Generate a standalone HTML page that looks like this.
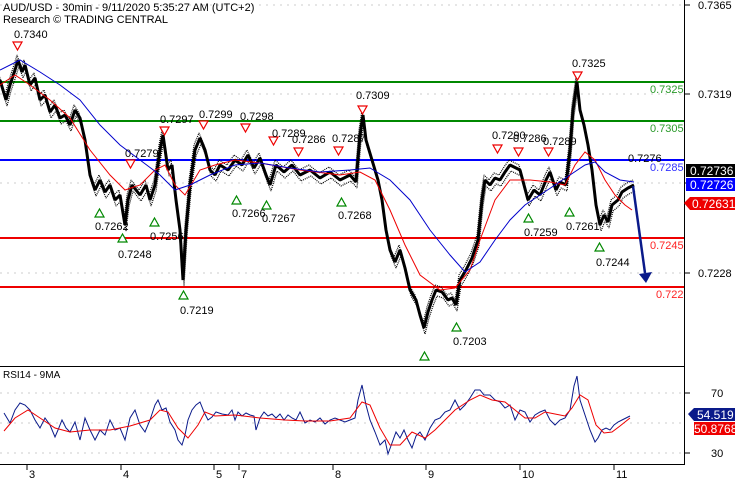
<!DOCTYPE html>
<html><head><meta charset="utf-8"><style>
html,body{margin:0;padding:0;background:#fff;width:735px;height:480px;overflow:hidden}
svg{display:block;font-family:"Liberation Sans",Arial,sans-serif}
</style></head><body>
<svg width="735" height="480" viewBox="0 0 735 480">
<defs>
<polyline id="px" fill="none" stroke-linejoin="bevel" points="0,80 6,100 10,85 15,70 18,60 22,72 25,65 30,85 35,78 40,100 45,95 50,112 55,105 60,118 65,115 70,125 75,110 80,118 85,140 90,175 95,190 100,180 105,192 110,185 115,200 120,195 125,225 128,200 132,185 140,195 146,185 150,200 155,185 160,150 163,135 168,170 172,165 176,200 180,230 183,280 186,230 190,185 195,150 200,138 205,150 210,170 215,175 220,165 228,170 235,160 242,165 248,155 254,168 260,158 266,175 270,185 276,165 284,172 292,165 300,175 310,170 320,178 330,172 340,180 350,175 356,182 360,135 363,115 366,140 372,160 378,180 382,200 386,230 390,250 395,262 400,250 405,268 410,290 416,300 420,315 424,328 428,312 432,300 436,290 442,292 448,300 452,298 456,305 460,280 466,270 472,258 478,240 482,200 485,180 490,185 495,178 500,180 505,172 510,165 516,168 520,170 524,185 528,200 534,190 540,195 546,180 550,172 556,190 560,182 566,185 570,150 573,110 577,82 580,110 584,125 588,145 592,170 596,205 600,225 604,215 608,222 612,205 618,200 622,192 628,188 634,185"/>
</defs>
<rect width="735" height="480" fill="#fff"/>
<g stroke="#ccc" stroke-dasharray="2,5">
<line x1="0" y1="5" x2="684" y2="5"/><line x1="0" y1="94" x2="684" y2="94"/><line x1="0" y1="183" x2="684" y2="183"/><line x1="0" y1="273" x2="684" y2="273"/>
<line x1="0" y1="393" x2="684" y2="393"/><line x1="0" y1="423" x2="684" y2="423"/><line x1="0" y1="453" x2="684" y2="453"/>
</g>
<line x1="684.5" y1="0" x2="684.5" y2="465" stroke="#000"/>
<line x1="0" y1="366.5" x2="684" y2="366.5" stroke="#000"/>
<line x1="0" y1="464.5" x2="684" y2="464.5" stroke="#000"/>
<g stroke="#000"><line x1="684" y1="5" x2="690" y2="5"/><line x1="684" y1="94" x2="690" y2="94"/><line x1="684" y1="183" x2="690" y2="183"/><line x1="684" y1="273" x2="690" y2="273"/><line x1="684" y1="393" x2="690" y2="393"/><line x1="684" y1="453" x2="690" y2="453"/></g>
<line x1="0" y1="82" x2="684" y2="82" stroke="#080" stroke-width="2"/>
<line x1="0" y1="121" x2="684" y2="121" stroke="#080" stroke-width="2"/>
<line x1="0" y1="160" x2="684" y2="160" stroke="#00f" stroke-width="2"/>
<line x1="0" y1="238" x2="684" y2="238" stroke="#e00" stroke-width="2"/>
<line x1="0" y1="287" x2="684" y2="287" stroke="#e00" stroke-width="2"/>
<text x="3" y="11" font-size="11">AUD/USD - 30min - 9/11/2020 5:35:27 AM (UTC+2)</text>
<text x="3" y="23" font-size="11">Research © TRADING CENTRAL</text>
<!-- price (candle-ish band) -->
<use href="#px" stroke="#000" stroke-width="3"/>
<use href="#px" stroke="#000" stroke-width="1.2" transform="translate(1,6)" stroke-dasharray="1,1"/>
<use href="#px" stroke="#000" stroke-width="1.2" transform="translate(-1,-5)" stroke-dasharray="1,1"/>
<polyline fill="none" stroke="#e00" stroke-width="1" points="0,85 15,75 30,85 50,100 70,118 90,150 110,175 125,190 140,185 155,170 165,165 175,185 185,195 200,170 215,165 235,160 260,163 300,170 340,175 360,172 375,180 390,210 405,245 420,275 440,290 455,288 470,270 480,240 495,200 510,180 530,180 550,182 565,185 575,165 585,152 595,160 605,180 615,195 625,205 632,210"/>
<polyline fill="none" stroke="#00c" stroke-width="1" points="0,70 20,60 40,72 60,85 80,100 100,125 120,145 140,160 160,175 175,190 190,185 210,175 235,165 260,163 290,168 320,172 350,170 370,168 390,180 410,200 430,230 450,255 465,272 480,262 495,240 510,220 525,205 540,195 555,185 570,175 585,165 595,162 605,172 620,180 634,182"/>
<line x1="633" y1="186" x2="645" y2="273" stroke="#0a1a8a" stroke-width="2.5"/>
<polygon points="639,274 652,272 646,283" fill="#0a1a8a"/>
<g fill="#fff" stroke="#e00" stroke-width="1.2">
<polygon points="13,42 22,42 17.5,50"/><polygon points="160,127 169,127 164.5,135"/><polygon points="199,121 208,121 203.5,129"/><polygon points="241,124 250,124 245.5,132"/><polygon points="269,137 278,137 273.5,145"/><polygon points="294,148 303,148 298.5,156"/><polygon points="126,160 135,160 130.5,168"/><polygon points="334,147 343,147 338.5,155"/><polygon points="358,106 367,106 362.5,114"/><polygon points="493,145 502,145 497.5,153"/><polygon points="514,148 523,148 518.5,156"/><polygon points="544,148 553,148 548.5,156"/><polygon points="573,72 582,72 577.5,80"/>
</g>
<g fill="#fff" stroke="#080" stroke-width="1.2">
<polygon points="95,217 104,217 99.5,209"/><polygon points="118,242 127,242 122.5,234"/><polygon points="150,226 159,226 154.5,218"/><polygon points="179,299 188,299 183.5,291"/><polygon points="232,204 241,204 236.5,196"/><polygon points="262,209 271,209 266.5,201"/><polygon points="337,206 346,206 341.5,198"/><polygon points="420,360 429,360 424.5,352"/><polygon points="452,331 461,331 456.5,323"/><polygon points="524,222 533,222 528.5,214"/><polygon points="565,216 574,216 569.5,208"/><polygon points="595,251 604,251 599.5,243"/>
</g>
<g font-size="11" fill="#000">
<text x="14" y="38">0.7340</text><text x="160" y="123">0.7297</text><text x="199" y="118">0.7299</text><text x="240" y="120">0.7298</text><text x="272" y="137">0.7289</text><text x="292" y="143">0.7286</text><text x="125" y="157">0.7279</text><text x="332" y="142">0.7287</text><text x="356" y="99">0.7309</text><text x="492" y="139">0.7290</text><text x="513" y="142">0.7286</text><text x="543" y="145">0.7289</text><text x="572" y="67">0.7325</text>
<text x="95" y="230">0.7262</text><text x="118" y="258">0.7248</text><text x="150" y="240">0.7256</text><text x="180" y="314">0.7219</text><text x="232" y="217">0.7266</text><text x="262" y="222">0.7267</text><text x="338" y="219">0.7268</text><text x="453" y="345">0.7203</text><text x="524" y="236">0.7259</text><text x="566" y="230">0.7261</text><text x="596" y="266">0.7244</text>
<text x="628" y="162">0.7276</text>
</g>
<g font-size="11">
<text x="650" y="93" fill="#2a9a2a">0.7325</text><text x="650" y="132" fill="#2a9a2a">0.7305</text><text x="650" y="171" fill="#33f">0.7285</text><text x="650" y="249" fill="#f22">0.7245</text><text x="656" y="298" fill="#f22">0.722</text>
</g>
<g font-size="11" fill="#000"><text x="698" y="9">0.7365</text><text x="698" y="98">0.7319</text><text x="698" y="277">0.7228</text><text x="711" y="397">70</text><text x="711" y="457">30</text></g>
<rect x="686" y="164" width="49" height="13" fill="#000"/><text x="690" y="175" font-size="12" fill="#fff">0.72736</text>
<rect x="686" y="178" width="49" height="13" fill="#00f"/><text x="690" y="189" font-size="12" fill="#fff">0.72726</text>
<polygon points="684,203 690,197 735,197 735,210 690,210" fill="#e00"/><text x="692" y="208" font-size="12" fill="#fff">0.72631</text>
<polygon points="688,414 694,408 735,408 735,421 694,421" fill="#0a1a8a"/><text x="697" y="419" font-size="12" fill="#fff">54.519</text>
<rect x="694" y="422" width="41" height="13" fill="#e00"/><text x="694" y="433" font-size="12" fill="#fff">50.8768</text>
<text x="3" y="378" font-size="10">RSI14 - 9MA</text>
<polyline fill="none" stroke="#0a1a8a" stroke-width="1" points="4,413 10,423 15,410 20,403 25,405 30,410 35,420 40,428 45,418 50,425 55,437 58,430 62,420 66,428 70,432 75,422 80,440 85,418 90,430 95,440 100,430 105,435 110,420 115,430 120,428 125,440 130,418 135,410 140,425 145,432 150,420 155,405 158,400 162,410 166,408 170,422 175,430 178,440 182,445 185,435 188,420 192,410 196,405 200,402 204,412 208,420 212,417 216,412 222,414 228,415 232,410 235,420 238,412 242,416 246,413 250,415 254,416 256,430 260,418 264,412 268,416 272,414 276,418 280,414 284,420 288,415 292,418 296,420 300,412 305,423 310,420 315,422 320,418 325,424 330,420 335,418 340,420 345,422 350,420 355,418 358,400 362,385 366,405 370,420 375,432 380,445 385,440 388,454 392,443 396,432 400,438 404,430 408,440 412,448 416,436 420,432 425,440 430,428 435,420 440,418 445,412 450,410 455,400 460,410 465,405 470,398 475,390 480,390 484,395 490,395 495,400 500,402 505,408 510,405 515,420 520,410 525,412 530,422 535,415 540,412 545,410 550,420 555,425 560,420 565,418 570,410 574,386 577,376 580,400 585,415 590,430 595,442 598,438 602,430 606,428 610,430 614,425 618,422 622,420 626,418 630,416"/>
<polyline fill="none" stroke="#e00" stroke-width="1" points="4,431 15,418 28,410 40,418 55,428 70,432 90,430 110,430 130,426 150,420 160,410 168,412 178,428 188,438 198,425 205,412 215,416 235,415 260,418 285,420 305,421 330,421 350,418 362,402 370,405 380,428 390,445 400,445 412,432 425,438 435,430 445,420 455,410 470,400 480,395 492,400 505,402 515,410 525,418 535,418 545,412 555,414 565,416 572,408 580,395 588,400 596,425 604,433 612,432 620,426 630,418"/>
<g stroke="#000"><line x1="27" y1="465" x2="27" y2="470"/><line x1="121" y1="465" x2="121" y2="470"/><line x1="214" y1="465" x2="214" y2="470"/><line x1="239" y1="465" x2="239" y2="470"/><line x1="333" y1="465" x2="333" y2="470"/><line x1="426" y1="465" x2="426" y2="470"/><line x1="520" y1="465" x2="520" y2="470"/><line x1="614" y1="465" x2="614" y2="470"/></g>
<g font-size="11"><text x="29" y="478">3</text><text x="123" y="478">4</text><text x="216" y="478">5</text><text x="241" y="478">7</text><text x="335" y="478">8</text><text x="428" y="478">9</text><text x="522" y="478">10</text><text x="616" y="478">11</text></g>
</svg>
</body></html>
